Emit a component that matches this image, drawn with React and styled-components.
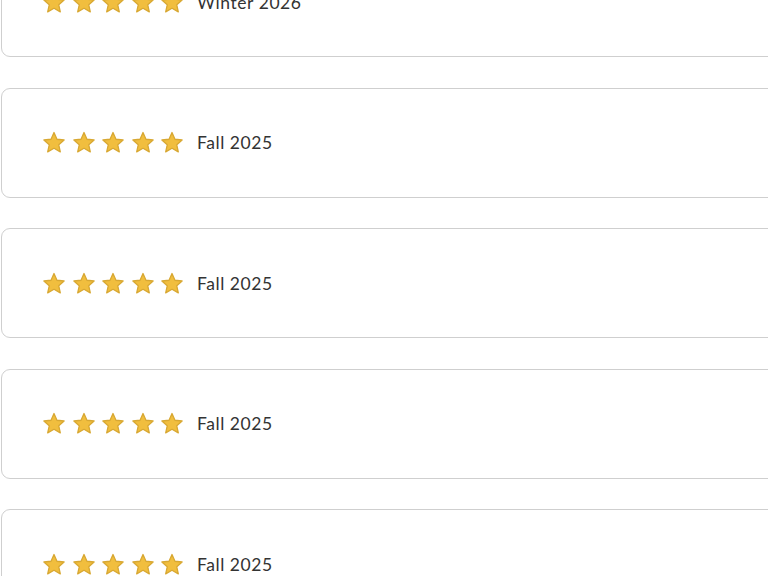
import React from "react";
import styled, { createGlobalStyle } from "styled-components";

const Global = createGlobalStyle`
  html, body { margin: 0; padding: 0; background: #fff; overflow: hidden; }
  body { font-family: "Lato", "Open Sans", sans-serif; }
`;

const List = styled.div`
  display: flex;
  flex-direction: column;
  gap: 30.6px;
  margin-top: -53px;
  margin-left: 1px;
  width: 820px;
`;

const Card = styled.div`
  box-sizing: border-box;
  height: 110px;
  border: 1px solid #cfcfcf;
  border-radius: 9px;
  background: #fff;
  display: flex;
  align-items: center;
  padding-left: 40px;
  gap: 13px;
`;

const Stars = styled.div`
  display: flex;
  gap: 5.5px;
  align-items: center;
`;

const Label = styled.span`
  font-family: "Lato", "Open Sans", sans-serif;
  font-size: 17.5px;
  color: #333;
  letter-spacing: 0.55px;
`;

const Star = () => (
  <svg width="24" height="23" viewBox="0 0 24 23">
    <path
      d="M12 1.5 L14.94 8.25 L22.1 9 L16.76 13.85 L18.3 20.9 L12 17.3 L5.7 20.9 L7.24 13.85 L1.9 9 L9.06 8.25 Z"
      fill="#F1BE3E"
      stroke="#D8A833"
      strokeWidth="1.3"
      strokeLinejoin="round"
    />
  </svg>
);

const items = ["Winter 2026", "Fall 2025", "Fall 2025", "Fall 2025", "Fall 2025"];

export default function App() {
  return (
    <>
      <Global />
      <List>
        {items.map((t, i) => (
          <Card key={i}>
            <Stars>
              {[0, 1, 2, 3, 4].map((s) => (
                <Star key={s} />
              ))}
            </Stars>
            <Label>{t}</Label>
          </Card>
        ))}
      </List>
    </>
  );
}
